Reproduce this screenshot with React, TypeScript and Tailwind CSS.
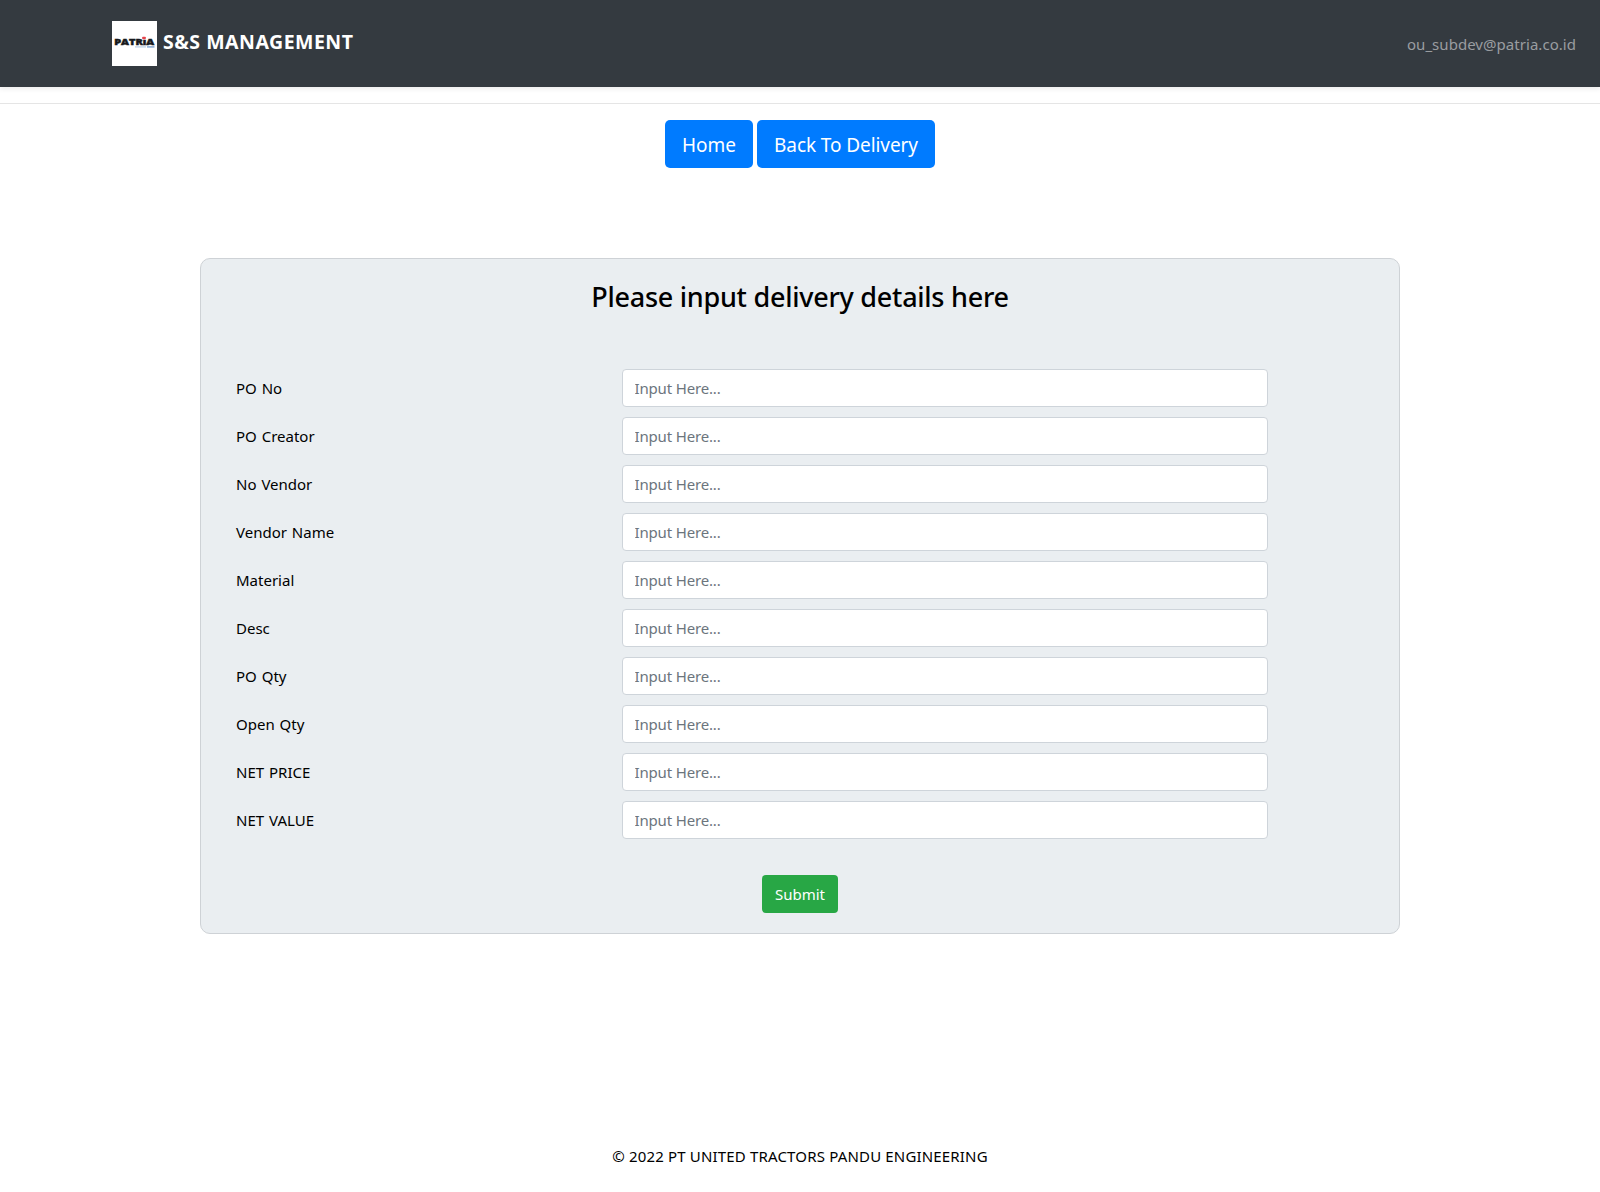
const fields = [
  'PO No', 'PO Creator', 'No Vendor', 'Vendor Name', 'Material',
  'Desc', 'PO Qty', 'Open Qty', 'NET PRICE', 'NET VALUE',
];

function Logo() {
  return (
    <svg width="45" height="45" viewBox="0 0 45 45" className="block shrink-0 bg-white" aria-hidden="true">
      <text x="2.2" y="24.3" fontFamily="Open Sans, sans-serif" fontWeight="800" fontSize="9.4" textLength="40" lengthAdjust="spacingAndGlyphs" fill="#17191c" stroke="#17191c" strokeWidth="0.5">PATRıA</text>
      <rect x="30.2" y="15.8" width="3.6" height="2.4" rx="0.8" fill="#e5444b" />
      <rect x="23" y="25.3" width="11" height="1.2" fill="#b9cde4" />
      <rect x="35" y="25.1" width="7.5" height="1.6" fill="#8fb0d8" />
    </svg>
  );
}

export default function App() {
  return (
    <div className="flex h-[1192px] w-full flex-col bg-white font-['Noto_Sans','Open_Sans',sans-serif] text-[15px] leading-6 text-black">
      <header className="flex h-[87px] shrink-0 items-center justify-between bg-[#343a40] pl-28 pr-6 shadow-[0_2px_5px_rgba(0,0,0,0.08)]">
        <div className="flex items-center gap-1.5">
          <Logo />
          <span className="mb-1 whitespace-nowrap text-[19.5px] font-bold leading-[30px] tracking-[0.5px] text-white">S&amp;S MANAGEMENT</span>
        </div>
        <span className="whitespace-nowrap tracking-[0.04px] text-[#9a9da0]">ou_subdev@patria.co.id</span>
      </header>
      <hr className="mt-4 border-t border-[#e5e5e5]" />
      <nav className="mt-4 flex justify-center gap-1 text-[19px] leading-[30px] text-white">
        <button className="h-12 w-[88px] whitespace-nowrap rounded-[5px] bg-[#007bff] pt-0.5">Home</button>
        <button className="h-12 w-[178px] whitespace-nowrap rounded-[5px] bg-[#007bff] pt-0.5 tracking-[-0.08px]">Back To Delivery</button>
      </nav>
      <main className="mx-auto mt-[90px] h-[676px] w-[1200px] shrink-0 rounded-[10px] border border-[#ced2d6] bg-[#eaeef1]">
        <h1 className="mt-[21px] text-center text-[27px] font-medium leading-[34px] tracking-[-0.26px]">Please input delivery details here</h1>
        <form className="mt-[55px] pl-[35px]">
          <div className="flex flex-col gap-2.5">
            {fields.map((label) => (
              <label key={label} className="flex h-[38px] items-center">
                <span className="w-[386px] whitespace-nowrap [word-spacing:1px]">{label}</span>
                <input placeholder="Input Here..." className="h-[38px] w-[646px] rounded border border-[#ced4da] bg-white px-[11.5px] tracking-[-0.16px] placeholder:text-[#6c757d] placeholder:opacity-100" />
              </label>
            ))}
          </div>
          <div className="mt-9 flex justify-center pr-[35px]">
            <button type="button" className="h-[38px] w-[76px] rounded bg-[#28a745] text-white">Submit</button>
          </div>
        </form>
      </main>
      <footer className="mt-[210px] whitespace-nowrap text-center tracking-[0.17px]">© 2022 PT UNITED TRACTORS PANDU ENGINEERING</footer>
    </div>
  );
}
